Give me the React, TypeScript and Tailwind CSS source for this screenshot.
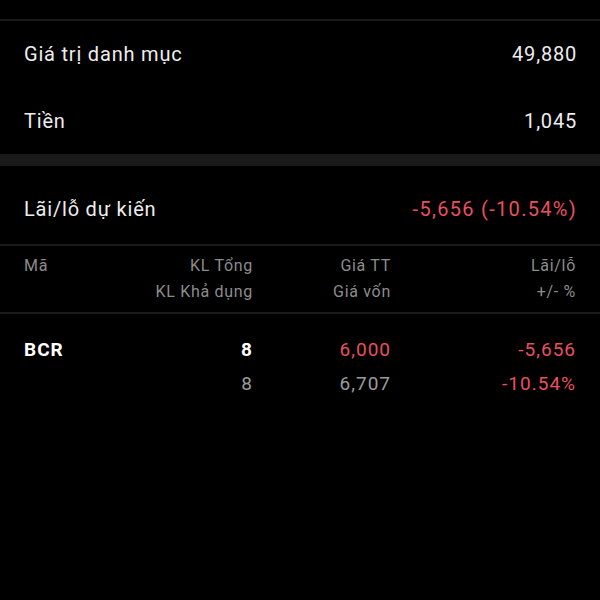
import React from 'react';

const rows = [
  { code: 'BCR', total: '8', available: '8', price: '6,000', cost: '6,707', pl: '-5,656', pct: '-10.54%' },
];

const App: React.FC = () => {
  return (
    <div className="bg-black min-h-screen w-full font-['Roboto',sans-serif] text-[#ededed]">
      <div className="h-[19px]" />
      <div className="h-[2px] bg-[#1c1c1c]" />

      <div className="h-[66px] pl-6 pr-[23px] flex items-center justify-between text-[20px] tracking-[0.8px]">
        <span>Giá trị danh mục</span>
        <span>49,880</span>
      </div>
      <div className="h-[67px] pl-6 pr-[23px] flex items-center justify-between text-[20px] tracking-[0.8px]">
        <span>Tiền</span>
        <span>1,045</span>
      </div>

      <div className="h-[12px] bg-[#1a1a1a]" />

      <div className="h-[78px] pt-2 pl-6 pr-[23px] flex items-center justify-between text-[20px] tracking-[0.8px]">
        <span>Lãi/lỗ dự kiến</span>
        <span className="text-[#e8505e] tracking-[1.3px]">-5,656 (-10.54%)</span>
      </div>
      <div className="h-[2px] bg-[#1a1a1a]" />

      <div className="pl-6 pr-[23px] py-[7px] grid grid-cols-[90px_139px_138px_185px] text-[16px] leading-[26px] tracking-[0.7px] text-[#8c8c8c]">
        <span>Mã</span>
        <span className="text-right">KL Tổng</span>
        <span className="text-right">Giá TT</span>
        <span className="text-right">Lãi/lỗ</span>
        <span />
        <span className="text-right">KL Khả dụng</span>
        <span className="text-right">Giá vốn</span>
        <span className="text-right">+/- %</span>
      </div>
      <div className="h-[2px] bg-[#1a1a1a]" />

      {rows.map((r) => (
        <div
          key={r.code}
          className="pl-6 pr-[23px] pt-[19px] grid grid-cols-[90px_139px_138px_185px] text-[19px] leading-[34px] tracking-[1px]"
        >
          <span className="font-bold text-white">{r.code}</span>
          <span className="text-right font-bold text-white">{r.total}</span>
          <span className="text-right text-[#e8505e]">{r.price}</span>
          <span className="text-right text-[#e8505e]">{r.pl}</span>
          <span />
          <span className="text-right text-[#9b9b9b]">{r.available}</span>
          <span className="text-right text-[#9b9b9b]">{r.cost}</span>
          <span className="text-right text-[#e8505e]">{r.pct}</span>
        </div>
      ))}
    </div>
  );
};

export default App;
